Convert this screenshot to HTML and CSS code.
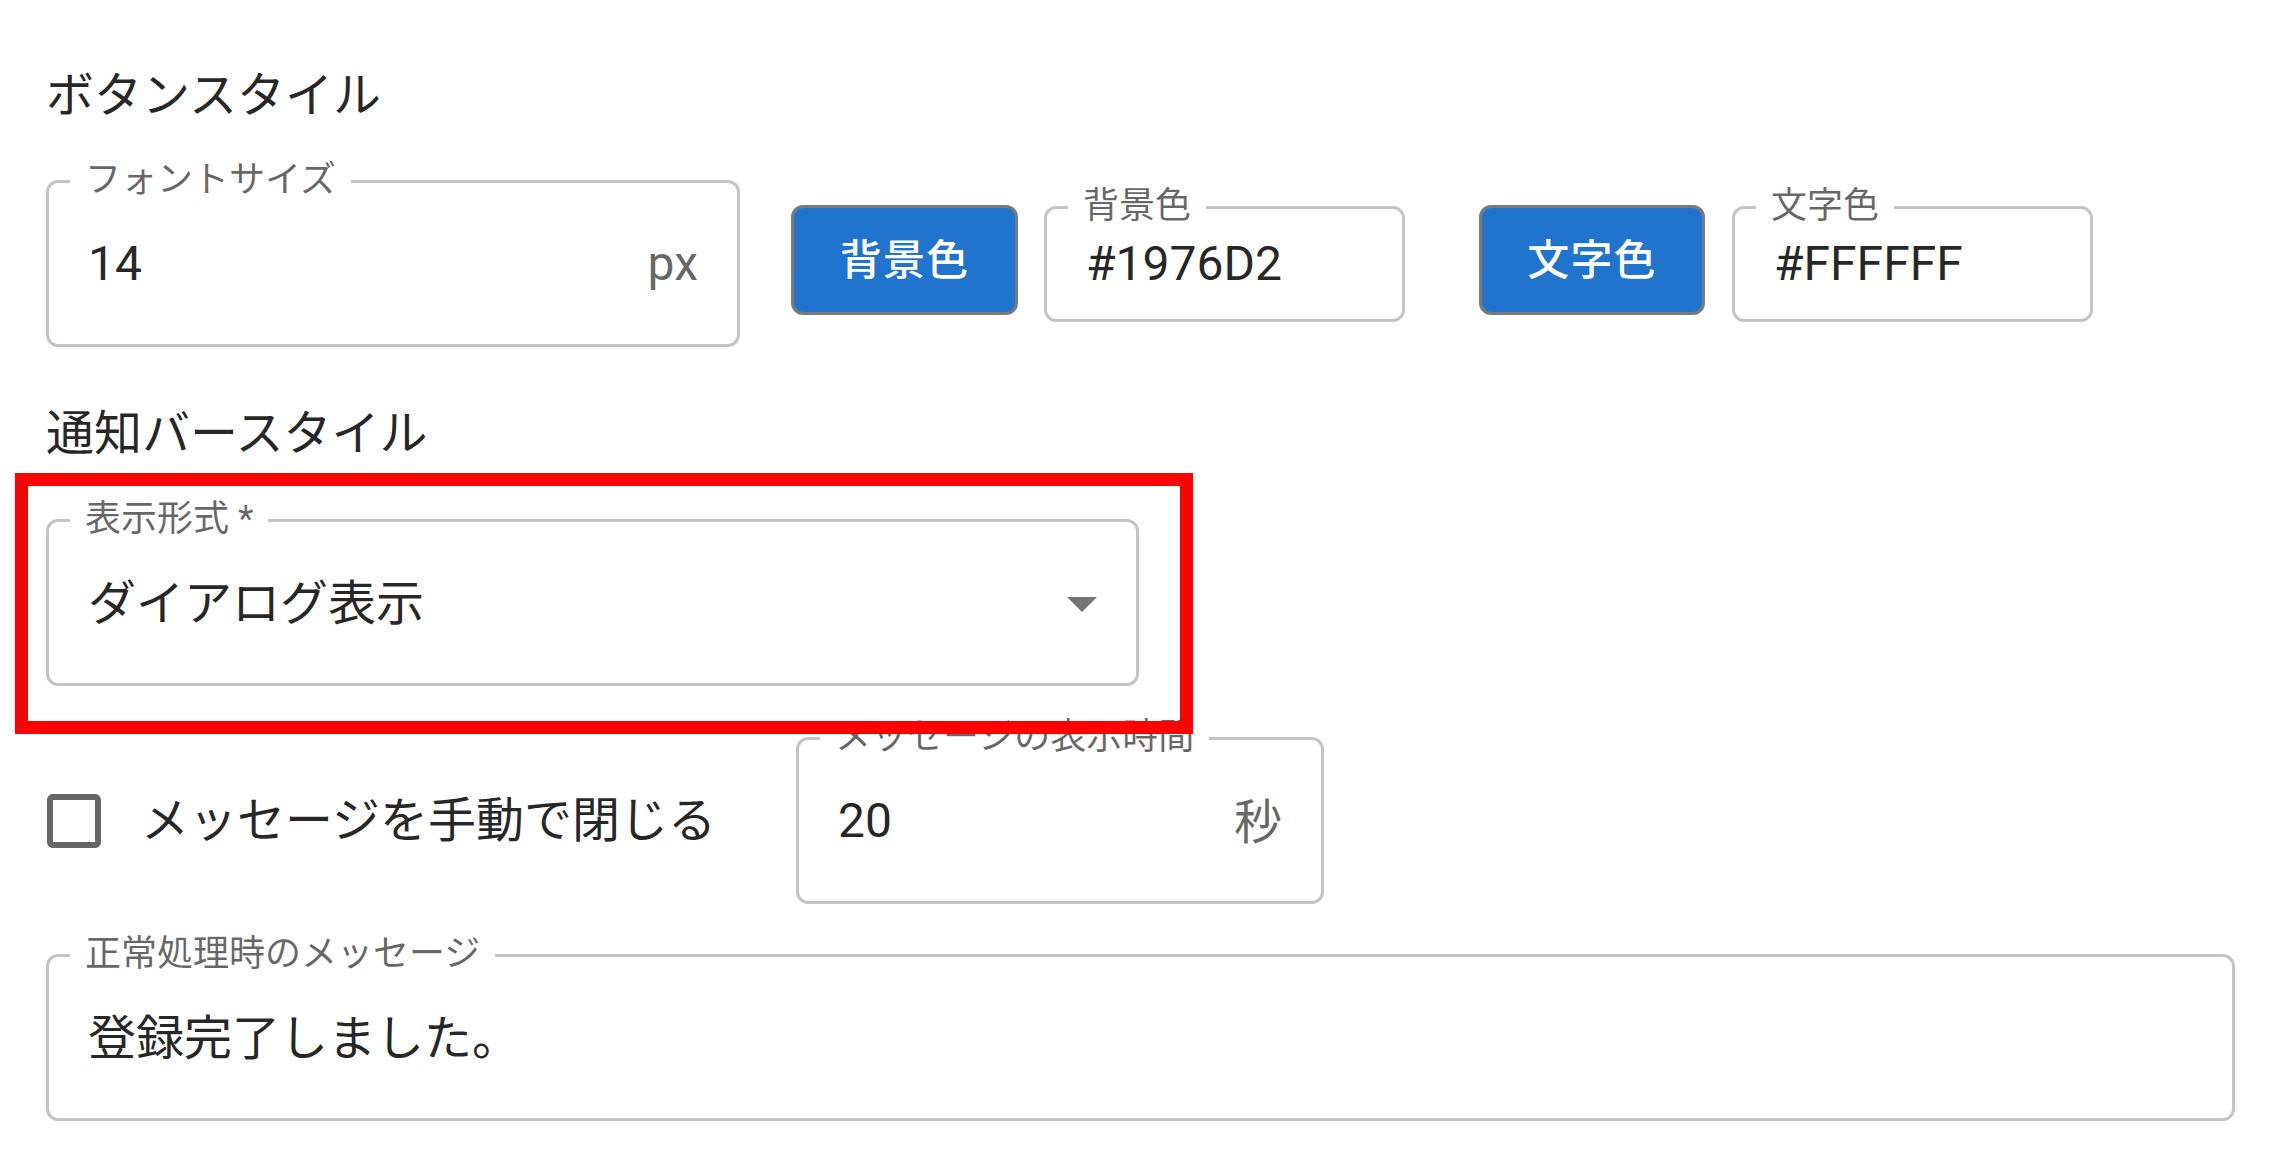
FILE: index.html
```html
<!DOCTYPE html>
<html lang="ja">
<head>
<meta charset="utf-8">
<title>スタイル設定</title>
<link rel="stylesheet" href="styles.css">
</head>
<body>
<div class="page">
  <h2 class="section-title">ボタンスタイル</h2>
  <div class="row row-button">
    <div class="field field-md w-fontsize">
      <span class="field-label">フォントサイズ</span>
      <span class="field-value">14</span>
      <span class="field-adorn">px</span>
    </div>
    <button class="color-btn btn-bg" type="button">背景色</button>
    <div class="field field-sm w-color">
      <span class="field-label">背景色</span>
      <span class="field-value value-hex">#1976D2</span>
    </div>
    <button class="color-btn btn-fg" type="button">文字色</button>
    <div class="field field-sm w-color">
      <span class="field-label">文字色</span>
      <span class="field-value value-hex">#FFFFFF</span>
    </div>
  </div>

  <h2 class="section-title title-notify">通知バースタイル</h2>
  <div class="field field-md w-select select">
    <span class="field-label">表示形式 *</span>
    <span class="field-value value-cjk">ダイアログ表示</span>
    <svg class="select-arrow" viewBox="0 0 24 24" aria-hidden="true"><path d="M7 10l5 5 5-5z"/></svg>
    <div class="highlight"></div>
  </div>

  <div class="row row-check">
    <label class="check">
      <svg class="check-icon" viewBox="0 0 24 24" aria-hidden="true"><path d="M19 5v14H5V5h14m0-2H5c-1.1 0-2 .9-2 2v14c0 1.1.9 2 2 2h14c1.1 0 2-.9 2-2V5c0-1.1-.9-2-2-2z"/></svg>
      <span class="check-label">メッセージを手動で閉じる</span>
    </label>
    <div class="field field-md w-time">
      <span class="field-label">メッセージの表示時間</span>
      <span class="field-value">20</span>
      <span class="field-adorn adorn-cjk">秒</span>
    </div>
  </div>

  <div class="field field-md w-msg">
    <span class="field-label">正常処理時のメッセージ</span>
    <span class="field-value value-cjk">登録完了しました。</span>
  </div>
</div>
</body>
</html>
```

FILE: styles.css
```css
html, body {
  margin: 0;
  padding: 0;
  background: #ffffff;
}

body {
  font-family: Roboto, "Noto Sans CJK JP", sans-serif;
  color: rgba(0, 0, 0, 0.87);
}

.page {
  padding: 68px 36px 0 46px;
  display: flex;
  flex-direction: column;
  align-items: flex-start;
}

.section-title {
  margin: 0;
  font-size: 48px;
  font-weight: 400;
  line-height: 56px;
  color: rgba(0, 0, 0, 0.87);
}

.title-notify {
  margin-top: 59px;
}

.row {
  display: flex;
}

.row-button {
  margin-top: 56px;
  align-items: flex-start;
}

/* outlined text field */
.field {
  position: relative;
  box-sizing: border-box;
  display: flex;
  align-items: center;
  border: 3px solid #c4c4c4;
  border-radius: 12px;
  padding: 0 39px;
  background: #ffffff;
}

.field-md {
  height: 167px;
}

.field-sm {
  height: 116px;
  margin-top: 26px;
}

.field-label {
  position: absolute;
  top: -21px;
  left: 21px;
  padding: 0 15px;
  background: #ffffff;
  font-size: 36px;
  line-height: 36px;
  color: rgba(0, 0, 0, 0.6);
  white-space: nowrap;
}

.field-value {
  flex: 1;
  font-size: 48px;
  color: rgba(0, 0, 0, 0.87);
  white-space: nowrap;
}

.value-cjk {
  padding-bottom: 8px;
}

.value-hex {
  padding-bottom: 2px;
}

.field-adorn {
  font-size: 48px;
  color: rgba(0, 0, 0, 0.6);
  white-space: nowrap;
}

.adorn-cjk {
  padding-bottom: 6px;
}

.w-fontsize {
  width: 694px;
}

.w-color {
  width: 361px;
}

.w-select {
  width: 1093px;
  margin-top: 57px;
}

.w-time {
  width: 528px;
}

.w-msg {
  width: 2189px;
  margin-top: 50px;
}

/* colour buttons */
.color-btn {
  box-sizing: border-box;
  height: 110px;
  width: 227px;
  margin-top: 25px;
  border: 3px solid #7a7a7a;
  border-radius: 12px;
  background: #2174ce;
  color: #ffffff;
  font-family: Roboto, "Noto Sans CJK JP", sans-serif;
  font-size: 42px;
  font-weight: 500;
  letter-spacing: 1.2px;
  padding: 0 0 8px;
  cursor: pointer;
}

.btn-bg {
  margin-left: 51px;
}

.btn-fg {
  margin-left: 74px;
  width: 226px;
}

.row-button .w-color {
  margin-left: 26px;
}

.row-button .btn-fg + .w-color {
  margin-left: 27px;
}

/* select */
.select {
  padding-right: 18px;
}

.select-arrow {
  width: 72px;
  height: 72px;
  fill: rgba(0, 0, 0, 0.54);
  flex: none;
}

.highlight {
  position: absolute;
  left: -34px;
  top: -49px;
  right: -57px;
  bottom: -51px;
  border: 13px solid #ff0000;
  z-index: 10;
  pointer-events: none;
}

/* checkbox row */
.row-check {
  margin-top: 51px;
  align-items: center;
}

.check {
  display: flex;
  align-items: center;
  margin-left: -8px;
  margin-right: 80px;
}

.check-icon {
  width: 72px;
  height: 72px;
  fill: rgba(0, 0, 0, 0.6);
  flex: none;
}

.check-label {
  margin-left: 31px;
  font-size: 48px;
  line-height: 56px;
  color: rgba(0, 0, 0, 0.87);
  white-space: nowrap;
}
```
